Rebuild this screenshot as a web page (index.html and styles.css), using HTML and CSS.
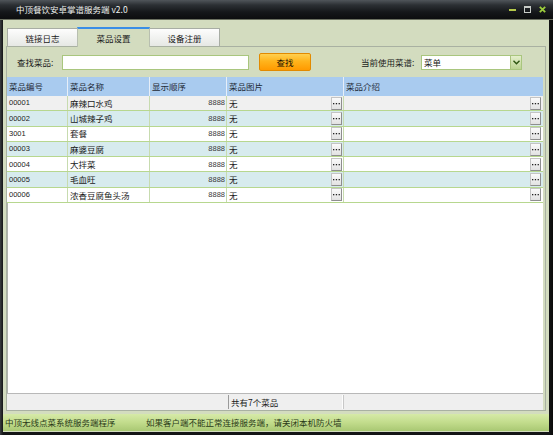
FILE: index.html
```html
<!DOCTYPE html>
<html lang="zh-CN">
<head>
<meta charset="utf-8">
<title>中顶餐饮安卓掌谱服务端 v2.0</title>
<link rel="stylesheet" href="styles.css">
</head>
<body>
<div class="window">
  <div class="titlebar">
    <span class="title">中顶餐饮安卓掌谱服务端 v2.0</span>
    <div class="controls">
      <span class="ctl min"></span>
      <span class="ctl max"></span>
      <svg class="ctl close" width="7" height="7" viewBox="0 0 7 7"><path d="M0.8 0.8 L6.2 6.2 M6.2 0.8 L0.8 6.2" stroke="#9ccc3c" stroke-width="1.8"/></svg>
    </div>
  </div>
  <div class="client">
    <div class="tabs">
      <div class="tab">链接日志</div>
      <div class="tab active">菜品设置</div>
      <div class="tab">设备注册</div>
    </div>
    <div class="panel">
      <div class="search">
        <span class="lbl">查找菜品:</span>
        <div class="input"></div>
        <div class="btn">查找</div>
        <span class="lbl lbl2">当前使用菜谱:</span>
        <div class="select">
          <span class="sel-text">菜单</span>
          <span class="arrow"><svg width="7" height="5" viewBox="0 0 7 5"><path d="M0.5 0.8 L3.5 3.8 L6.5 0.8" fill="none" stroke="#2d5510" stroke-width="1.4"/></svg></span>
        </div>
      </div>
      <div class="grid">
        <div class="row head">
          <div class="c">菜品编号</div><div class="c">菜品名称</div><div class="c">显示顺序</div><div class="c">菜品图片</div><div class="c last">菜品介绍</div>
        </div>
        <div class="row r-sel">
          <div class="c num">00001</div><div class="c">麻辣口水鸡</div><div class="c ord">8888</div><div class="c pic"><span>无</span><span class="dots"><svg width="7" height="2" viewBox="0 0 7 2"><rect x="0" y="0" width="1.3" height="1.3" fill="#222"/><rect x="2.8" y="0" width="1.3" height="1.3" fill="#222"/><rect x="5.6" y="0" width="1.3" height="1.3" fill="#222"/></svg></span></div><div class="c desc last"><span class="dots"><svg width="7" height="2" viewBox="0 0 7 2"><rect x="0" y="0" width="1.3" height="1.3" fill="#222"/><rect x="2.8" y="0" width="1.3" height="1.3" fill="#222"/><rect x="5.6" y="0" width="1.3" height="1.3" fill="#222"/></svg></span></div>
        </div>
        <div class="row r-alt">
          <div class="c num">00002</div><div class="c">山城辣子鸡</div><div class="c ord">8888</div><div class="c pic"><span>无</span><span class="dots"><svg width="7" height="2" viewBox="0 0 7 2"><rect x="0" y="0" width="1.3" height="1.3" fill="#222"/><rect x="2.8" y="0" width="1.3" height="1.3" fill="#222"/><rect x="5.6" y="0" width="1.3" height="1.3" fill="#222"/></svg></span></div><div class="c desc last"><span class="dots"><svg width="7" height="2" viewBox="0 0 7 2"><rect x="0" y="0" width="1.3" height="1.3" fill="#222"/><rect x="2.8" y="0" width="1.3" height="1.3" fill="#222"/><rect x="5.6" y="0" width="1.3" height="1.3" fill="#222"/></svg></span></div>
        </div>
        <div class="row">
          <div class="c num">3001</div><div class="c">套餐</div><div class="c ord">8888</div><div class="c pic"><span>无</span><span class="dots"><svg width="7" height="2" viewBox="0 0 7 2"><rect x="0" y="0" width="1.3" height="1.3" fill="#222"/><rect x="2.8" y="0" width="1.3" height="1.3" fill="#222"/><rect x="5.6" y="0" width="1.3" height="1.3" fill="#222"/></svg></span></div><div class="c desc last"><span class="dots"><svg width="7" height="2" viewBox="0 0 7 2"><rect x="0" y="0" width="1.3" height="1.3" fill="#222"/><rect x="2.8" y="0" width="1.3" height="1.3" fill="#222"/><rect x="5.6" y="0" width="1.3" height="1.3" fill="#222"/></svg></span></div>
        </div>
        <div class="row r-alt">
          <div class="c num">00003</div><div class="c">麻婆豆腐</div><div class="c ord">8888</div><div class="c pic"><span>无</span><span class="dots"><svg width="7" height="2" viewBox="0 0 7 2"><rect x="0" y="0" width="1.3" height="1.3" fill="#222"/><rect x="2.8" y="0" width="1.3" height="1.3" fill="#222"/><rect x="5.6" y="0" width="1.3" height="1.3" fill="#222"/></svg></span></div><div class="c desc last"><span class="dots"><svg width="7" height="2" viewBox="0 0 7 2"><rect x="0" y="0" width="1.3" height="1.3" fill="#222"/><rect x="2.8" y="0" width="1.3" height="1.3" fill="#222"/><rect x="5.6" y="0" width="1.3" height="1.3" fill="#222"/></svg></span></div>
        </div>
        <div class="row">
          <div class="c num">00004</div><div class="c">大拌菜</div><div class="c ord">8888</div><div class="c pic"><span>无</span><span class="dots"><svg width="7" height="2" viewBox="0 0 7 2"><rect x="0" y="0" width="1.3" height="1.3" fill="#222"/><rect x="2.8" y="0" width="1.3" height="1.3" fill="#222"/><rect x="5.6" y="0" width="1.3" height="1.3" fill="#222"/></svg></span></div><div class="c desc last"><span class="dots"><svg width="7" height="2" viewBox="0 0 7 2"><rect x="0" y="0" width="1.3" height="1.3" fill="#222"/><rect x="2.8" y="0" width="1.3" height="1.3" fill="#222"/><rect x="5.6" y="0" width="1.3" height="1.3" fill="#222"/></svg></span></div>
        </div>
        <div class="row r-alt">
          <div class="c num">00005</div><div class="c">毛血旺</div><div class="c ord">8888</div><div class="c pic"><span>无</span><span class="dots"><svg width="7" height="2" viewBox="0 0 7 2"><rect x="0" y="0" width="1.3" height="1.3" fill="#222"/><rect x="2.8" y="0" width="1.3" height="1.3" fill="#222"/><rect x="5.6" y="0" width="1.3" height="1.3" fill="#222"/></svg></span></div><div class="c desc last"><span class="dots"><svg width="7" height="2" viewBox="0 0 7 2"><rect x="0" y="0" width="1.3" height="1.3" fill="#222"/><rect x="2.8" y="0" width="1.3" height="1.3" fill="#222"/><rect x="5.6" y="0" width="1.3" height="1.3" fill="#222"/></svg></span></div>
        </div>
        <div class="row">
          <div class="c num">00006</div><div class="c">浓香豆腐鱼头汤</div><div class="c ord">8888</div><div class="c pic"><span>无</span><span class="dots"><svg width="7" height="2" viewBox="0 0 7 2"><rect x="0" y="0" width="1.3" height="1.3" fill="#222"/><rect x="2.8" y="0" width="1.3" height="1.3" fill="#222"/><rect x="5.6" y="0" width="1.3" height="1.3" fill="#222"/></svg></span></div><div class="c desc last"><span class="dots"><svg width="7" height="2" viewBox="0 0 7 2"><rect x="0" y="0" width="1.3" height="1.3" fill="#222"/><rect x="2.8" y="0" width="1.3" height="1.3" fill="#222"/><rect x="5.6" y="0" width="1.3" height="1.3" fill="#222"/></svg></span></div>
        </div>
        <div class="empty"></div>
        <div class="footer">
          <div class="f-left"></div>
          <div class="f-cell">共有7个菜品</div>
          <div class="f-right"></div>
        </div>
      </div>
    </div>
    <div class="status">
      <span class="s1">中顶无线点菜系统服务端程序</span>
      <span class="s2">如果客户端不能正常连接服务端，请关闭本机防火墙</span>
    </div>
  </div>
</div>
</body>
</html>
```
FILE: styles.css
```css
* { box-sizing: border-box; }
html, body {
  margin: 0;
  padding: 0;
  width: 553px;
  height: 435px;
  overflow: hidden;
  background: #0c0d0e;
}
body {
  font-family: "Noto Sans CJK SC", "Liberation Sans", sans-serif;
  font-size: 8.5px;
  color: #1a1a1a;
}
.window {
  width: 553px;
  height: 435px;
  display: flex;
  flex-direction: column;
  background: linear-gradient(to right, #3a3d40 0, #141516 3px, #141516 549px, #0a0a0a 553px);
  padding: 0 4px 3px 3px;
}
.titlebar {
  height: 20px;
  margin: 0 -4px 0 -3px;
  padding: 0 7px 0 16px;
  display: flex;
  align-items: center;
  background: linear-gradient(to bottom, #50555a 0, #2c3034 5px, #15171a 12px, #0b0c0d 20px);
  border-bottom: 1px solid #6b7060;
}
.title {
  color: #eef0ee;
  font-size: 8.5px;
  line-height: 1;
  flex: 1;
}
.controls {
  display: flex;
  align-items: center;
  gap: 8px;
}
.ctl { display: block; }
.min {
  width: 7px;
  height: 2px;
  background: #b4c84a;
  margin-top: 1px;
}
.max {
  width: 7px;
  height: 7px;
  border: 1px solid #c8ccc8;
  border-top-width: 2px;
}
.client {
  flex: 1;
  display: flex;
  flex-direction: column;
  background: #d3dcbf;
}
.tabs {
  height: 26px;
  display: flex;
  align-items: flex-end;
  padding-left: 4px;
}
.tab {
  width: 71px;
  height: 18px;
  display: flex;
  align-items: center;
  justify-content: center;
  background: linear-gradient(to bottom, #fdfdfd, #e6e8e4);
  border: 1px solid #a8ada4;
  border-bottom: none;
  color: #1a1a1a;
}
.tab + .tab { margin-left: -1px; }
.tab.active {
  width: 73px;
  height: 20px;
  background: #d3dcbf;
  border-top: 2px solid #3a8ee6;
  border-left: 1px solid #b8bfb0;
  border-right: 1px solid #b8bfb0;
  position: relative;
  z-index: 1;
  margin-bottom: -1px;
}
.panel {
  height: 365px;
  margin: 0 3px;
  border: 1px solid #a9b1a2;
  display: flex;
  flex-direction: column;
}
.search {
  height: 30px;
  display: flex;
  align-items: center;
  padding-left: 10px;
}
.lbl { width: 38px; line-height: 1; white-space: nowrap; }
.input {
  width: 187px;
  height: 15px;
  margin-left: 7px;
  background: #fff;
  border: 1px solid #a9c67e;
}
.btn {
  width: 52px;
  height: 18px;
  margin-left: 10px;
  border-radius: 2px;
  border: 1px solid #e28a00;
  background: linear-gradient(to bottom, #ffd050 0, #ffb41c 45%, #ff9a00 100%);
  display: flex;
  align-items: center;
  justify-content: center;
  color: #1a1200;
}
.lbl2 { width: 56px; margin-left: 50px; }
.select {
  width: 101px;
  height: 15px;
  margin-left: 4px;
  background: #fff;
  border: 1px solid #a9c67e;
  display: flex;
  align-items: center;
  padding-left: 2px;
}
.sel-text { flex: 1; line-height: 1; }
.arrow {
  width: 11px;
  height: 13px;
  background: linear-gradient(to bottom, #e4efcc, #bcd392);
  border-left: 1px solid #aac27e;
  display: flex;
  align-items: center;
  justify-content: center;
}
.grid {
  flex: 1;
  margin-right: 2px;
  display: flex;
  flex-direction: column;
  background: #fff;
}
.row {
  display: grid;
  grid-template-columns: 61px 82px 77px 117px 198px;
  height: 15.3px;
  border-bottom: 1px solid #b7d78f;
  background: #fff;
}
.row.head {
  height: 19px;
  background: #a9cbef;
  border-bottom: none;
}
.row.r-sel { background: #f0f0f0; }
.row.r-alt { background: #d7ebee; }
.c {
  display: flex;
  align-items: center;
  padding-left: 2px;
  border-right: 1px solid #c7dbaf;
  line-height: 1;
  white-space: nowrap;
  overflow: hidden;
}
.head .c {
  border-right: 1px solid #e6eef8;
  color: #1e2a36;
}
.c.last { border-right: none; }
.num {
  font-family: "Liberation Sans", sans-serif;
  font-size: 7.5px;
  color: #222;
}
.ord {
  justify-content: flex-end;
  padding-right: 1px;
  font-family: "Liberation Sans", sans-serif;
  font-size: 7.5px;
  color: #3a3a3a;
}
.pic { justify-content: space-between; padding-right: 1px; }
.desc { justify-content: flex-end; padding-right: 1px; }
.dots {
  width: 11px;
  height: 13px;
  background: linear-gradient(to bottom, #fbfbfb, #e2e2e2);
  border: 1px solid #c4c4c4;
  border-right-color: #8e8e8e;
  border-bottom-color: #8e8e8e;
  display: flex;
  align-items: center;
  justify-content: center;
  padding-top: 1px;
}
.dots svg { display: block; }
.empty { flex: 1; border-left: 1px solid #b0b4ae; }
.footer {
  height: 17px;
  display: flex;
  background: #efefef;
  border-top: 1px solid #b8b8b8;
  padding: 1px 0 1px 0;
}
.f-left { width: 221px; }
.f-cell {
  width: 115px;
  border-left: 1px solid #9a9a9a;
  border-right: 1px solid #fdfdfd;
  display: flex;
  align-items: center;
  padding-left: 2px;
  line-height: 1;
  box-shadow: 1px 0 0 #c8c8c8;
}
.f-right { flex: 1; }
.status {
  height: 17px;
  margin-top: 3px;
  display: flex;
  align-items: center;
  padding-left: 2px;
  background: linear-gradient(to bottom, #d6eaa8 0, #c2dc8c 50%, #a9c873 100%);
  color: #2a3a18;
  line-height: 1;
  white-space: nowrap;
}
.s1 { width: 141px; flex-shrink: 0; }
.s2 { flex-shrink: 0; }
```
